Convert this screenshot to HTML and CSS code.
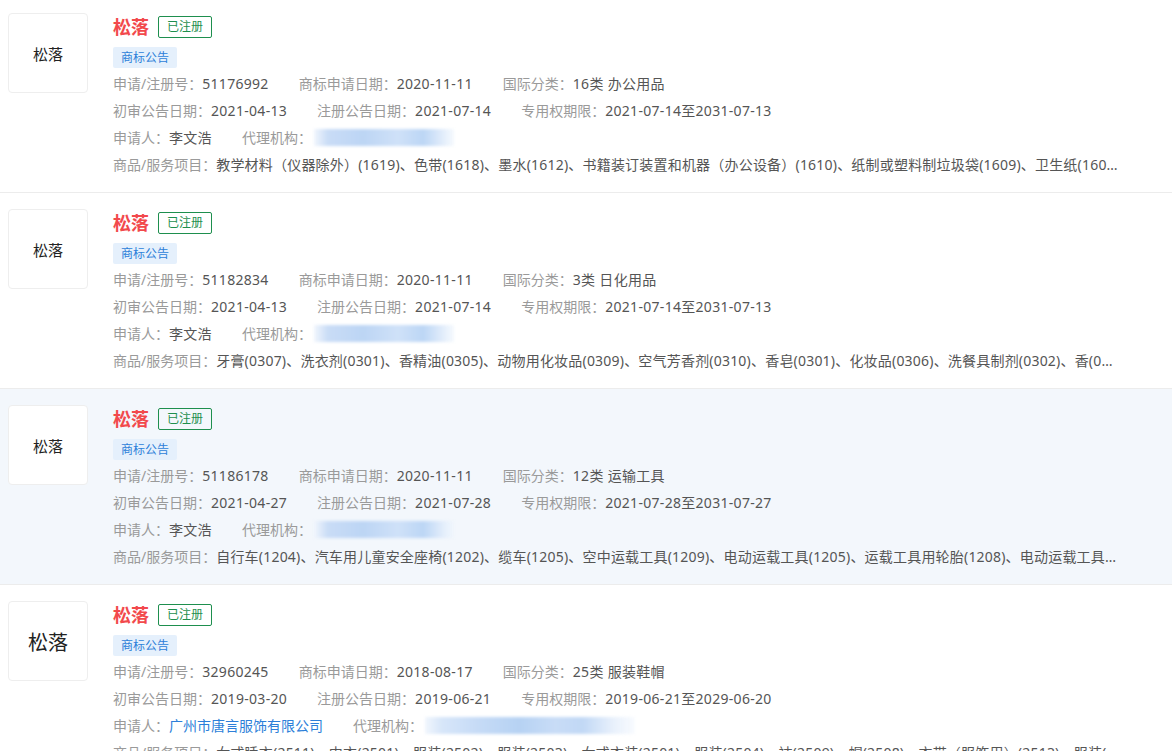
FILE: index.html
```html
<!DOCTYPE html>
<html lang="zh-CN">
<head>
<meta charset="utf-8">
<title>松落</title>
<link rel="stylesheet" href="styles.css">
</head>
<body>
<div class="list">

  <div class="item">
    <div class="logo">松落</div>
    <div class="main">
      <div class="title-row"><span class="name">松落</span><span class="status">已注册</span></div>
      <div class="tags"><span class="tag">商标公告</span></div>
      <div class="row"><span class="field"><span class="lbl">申请/注册号：</span><span class="val">51176992</span></span><span class="field"><span class="lbl">商标申请日期：</span><span class="val">2020-11-11</span></span><span class="field"><span class="lbl">国际分类：</span><span class="val">16类 办公用品</span></span></div>
      <div class="row"><span class="field"><span class="lbl">初审公告日期：</span><span class="val">2021-04-13</span></span><span class="field"><span class="lbl">注册公告日期：</span><span class="val">2021-07-14</span></span><span class="field"><span class="lbl">专用权期限：</span><span class="val">2021-07-14至2031-07-13</span></span></div>
      <div class="row"><span class="field"><span class="lbl">申请人：</span><span class="val">李文浩</span></span><span class="field"><span class="lbl">代理机构：</span><span class="blur"></span></span></div>
      <div class="row goods"><span class="lbl">商品/服务项目：</span><span class="val">教学材料（仪器除外）(1619)、色带(1618)、墨水(1612)、书籍装订装置和机器（办公设备）(1610)、纸制或塑料制垃圾袋(1609)、卫生纸(1604)、印刷品(1607)、文具(1614)</span></div>
    </div>
  </div>

  <div class="item">
    <div class="logo">松落</div>
    <div class="main">
      <div class="title-row"><span class="name">松落</span><span class="status">已注册</span></div>
      <div class="tags"><span class="tag">商标公告</span></div>
      <div class="row"><span class="field"><span class="lbl">申请/注册号：</span><span class="val">51182834</span></span><span class="field"><span class="lbl">商标申请日期：</span><span class="val">2020-11-11</span></span><span class="field"><span class="lbl">国际分类：</span><span class="val">3类 日化用品</span></span></div>
      <div class="row"><span class="field"><span class="lbl">初审公告日期：</span><span class="val">2021-04-13</span></span><span class="field"><span class="lbl">注册公告日期：</span><span class="val">2021-07-14</span></span><span class="field"><span class="lbl">专用权期限：</span><span class="val">2021-07-14至2031-07-13</span></span></div>
      <div class="row"><span class="field"><span class="lbl">申请人：</span><span class="val">李文浩</span></span><span class="field"><span class="lbl">代理机构：</span><span class="blur"></span></span></div>
      <div class="row goods"><span class="lbl">商品/服务项目：</span><span class="val">牙膏(0307)、洗衣剂(0301)、香精油(0305)、动物用化妆品(0309)、空气芳香剂(0310)、香皂(0301)、化妆品(0306)、洗餐具制剂(0302)、香(0306)、口气清新剂(0307)</span></div>
    </div>
  </div>

  <div class="item active">
    <div class="logo">松落</div>
    <div class="main">
      <div class="title-row"><span class="name">松落</span><span class="status">已注册</span></div>
      <div class="tags"><span class="tag">商标公告</span></div>
      <div class="row"><span class="field"><span class="lbl">申请/注册号：</span><span class="val">51186178</span></span><span class="field"><span class="lbl">商标申请日期：</span><span class="val">2020-11-11</span></span><span class="field"><span class="lbl">国际分类：</span><span class="val">12类 运输工具</span></span></div>
      <div class="row"><span class="field"><span class="lbl">初审公告日期：</span><span class="val">2021-04-27</span></span><span class="field"><span class="lbl">注册公告日期：</span><span class="val">2021-07-28</span></span><span class="field"><span class="lbl">专用权期限：</span><span class="val">2021-07-28至2031-07-27</span></span></div>
      <div class="row"><span class="field"><span class="lbl">申请人：</span><span class="val">李文浩</span></span><span class="field"><span class="lbl">代理机构：</span><span class="blur"></span></span></div>
      <div class="row goods"><span class="lbl">商品/服务项目：</span><span class="val">自行车(1204)、汽车用儿童安全座椅(1202)、缆车(1205)、空中运载工具(1209)、电动运载工具(1205)、运载工具用轮胎(1208)、电动运载工具(1202)、摩托车(1204)</span></div>
    </div>
  </div>

  <div class="item">
    <div class="logo big">松落</div>
    <div class="main">
      <div class="title-row"><span class="name">松落</span><span class="status">已注册</span></div>
      <div class="tags"><span class="tag">商标公告</span></div>
      <div class="row"><span class="field"><span class="lbl">申请/注册号：</span><span class="val">32960245</span></span><span class="field"><span class="lbl">商标申请日期：</span><span class="val">2018-08-17</span></span><span class="field"><span class="lbl">国际分类：</span><span class="val">25类 服装鞋帽</span></span></div>
      <div class="row"><span class="field"><span class="lbl">初审公告日期：</span><span class="val">2019-03-20</span></span><span class="field"><span class="lbl">注册公告日期：</span><span class="val">2019-06-21</span></span><span class="field"><span class="lbl">专用权期限：</span><span class="val">2019-06-21至2029-06-20</span></span></div>
      <div class="row"><span class="field"><span class="lbl">申请人：</span><span class="val link">广州市唐言服饰有限公司</span></span><span class="field"><span class="lbl">代理机构：</span><span class="blur wide"></span></span></div>
      <div class="row goods"><span class="lbl">商品/服务项目：</span><span class="val">女式睡衣(2511)、内衣(2501)、服装(2502)、服装(2503)、女式衣装(2501)、服装(2504)、袜(2509)、帽(2508)、衣带（服饰用）(2513)、服装(2502)、鞋(2507)</span></div>
    </div>
  </div>

</div>
</body>
</html>
```

FILE: styles.css
```css
* { box-sizing: border-box; }

html, body {
  margin: 0;
  padding: 0;
  background: #fff;
  overflow: hidden;
}

body {
  font-family: "Noto Sans", "Noto Sans CJK SC", sans-serif;
  color: #555;
  font-size: 14px;
}

.list {
  margin-top: -3px;
}

.item {
  display: flex;
  gap: 25px;
  height: 196px;
  padding: 16px 52px 0 8px;
  border-bottom: 1px solid #ececec;
  background: #fff;
}

.item.active {
  background: #f3f7fc;
}

.logo {
  flex: none;
  width: 80px;
  height: 80px;
  border: 1px solid #eeeeee;
  border-radius: 4px;
  background: #fff;
  display: flex;
  align-items: center;
  justify-content: center;
  font-size: 15px;
  color: #222;
}

.logo.big {
  font-size: 20px;
}

.main {
  flex: 1;
  min-width: 0;
  padding-top: 3px;
}

.title-row {
  display: flex;
  align-items: center;
  height: 22px;
}

.name {
  font-size: 18px;
  font-weight: 700;
  color: #f2494c;
  line-height: 22px;
}

.status {
  margin-left: 9px;
  height: 22px;
  padding: 0 8px;
  border: 1px solid #1e8f4e;
  border-radius: 2px;
  color: #1e8f4e;
  font-size: 12px;
  line-height: 20px;
}

.tags {
  margin-top: 9px;
  height: 21px;
  display: flex;
}

.tag {
  display: inline-block;
  height: 21px;
  padding: 0 8px;
  background: #e5f0fc;
  color: #2d7fd9;
  font-size: 12px;
  line-height: 21px;
  border-radius: 2px;
}

.tags + .row {
  margin-top: 2px;
}

.row {
  height: 27px;
  line-height: 27px;
  white-space: nowrap;
  display: flex;
  align-items: center;
}

.field {
  margin-right: 30px;
  display: inline-flex;
  align-items: center;
}

.lbl {
  color: #9a9a9a;
}

.val {
  color: #555;
  letter-spacing: 0.3px;
}

.val.link {
  color: #2d7fd9;
  letter-spacing: 0;
}

.goods {
  display: block;
  overflow: hidden;
  text-overflow: ellipsis;
}

.goods .val {
  letter-spacing: 0.2px;
}

.blur {
  display: inline-block;
  width: 140px;
  height: 17px;
  margin-left: 2px;
  background: linear-gradient(90deg, #f1f6fd 0%, #c9dcf6 10%, #bcd5f4 35%, #cfe1f8 60%, #bcd6f5 78%, #e2edfb 92%, rgba(240,246,253,0.6) 100%);
  filter: blur(1.5px);
}

.blur.wide {
  width: 210px;
  background: linear-gradient(90deg, #f1f6fd 0%, #d7e6f9 8%, #c6dbf6 25%, #b6d2f3 45%, #c8dcf6 62%, #c1d8f5 75%, #e9f1fc 90%, rgba(244,248,254,0.6) 100%);
}
```
